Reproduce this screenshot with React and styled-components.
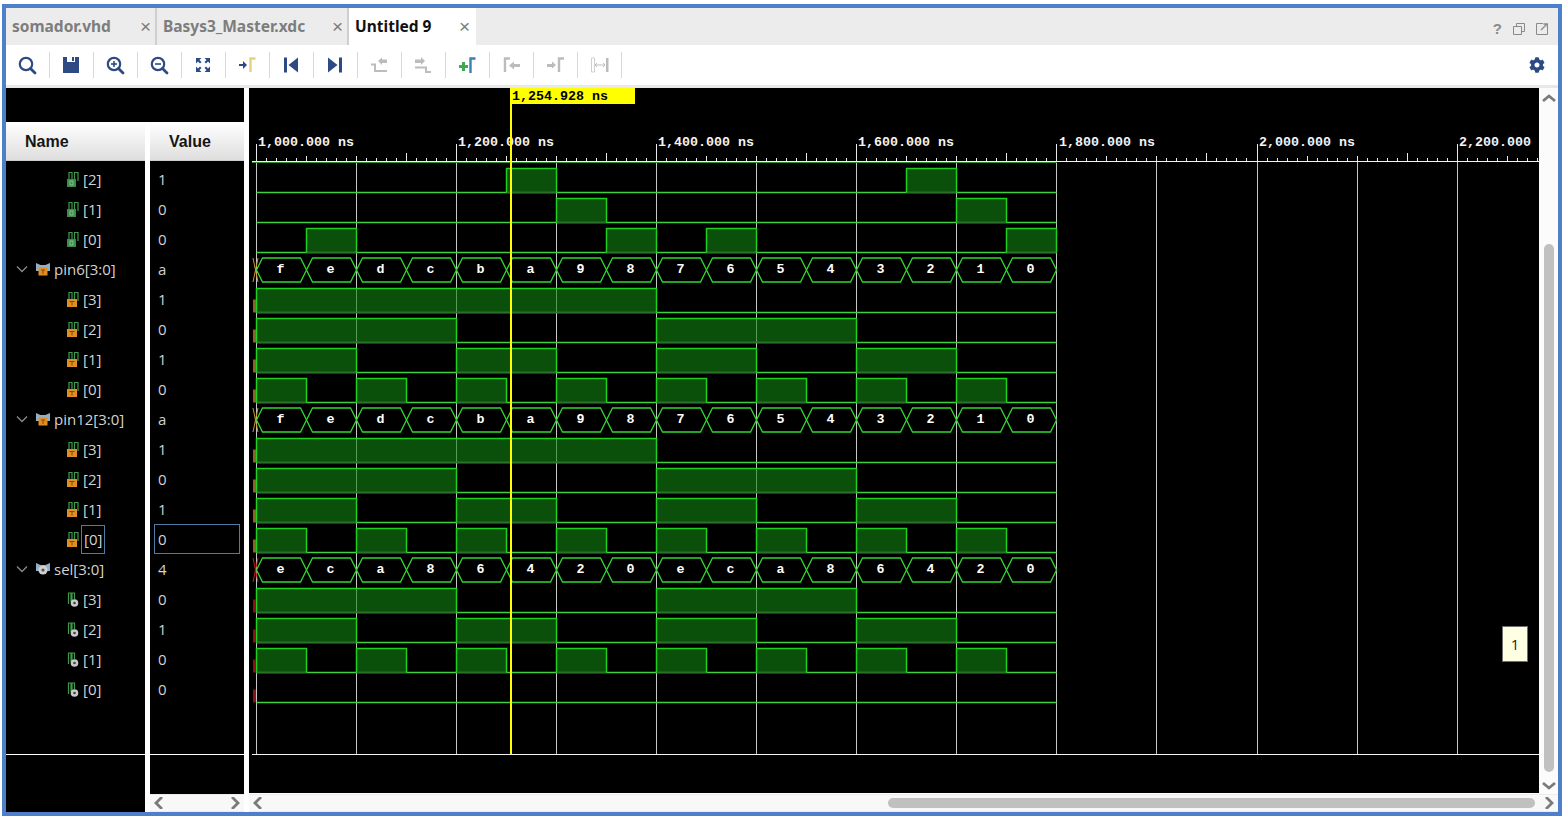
import React from 'react';
import styled, { createGlobalStyle } from 'styled-components';
import { FaCog } from 'react-icons/fa';

const GlobalStyle = createGlobalStyle`
  html, body {
    margin: 0;
    background: #ffffff;
    overflow: hidden;
  }
`;

const Window = styled.div`
  box-sizing: border-box;
  width: 1560px;
  height: 812px;
  margin: 4px 0 0 2px;
  border: 4px solid #4d7fcb;
  display: flex;
  flex-direction: column;
  font-family: 'Open Sans', 'Liberation Sans', sans-serif;
`;

const TabBar = styled.div`
  height: 37px;
  flex: none;
  background: #ececec;
  display: flex;
  align-items: stretch;
`;

const Tab = styled.div`
  box-sizing: border-box;
  width: ${(p) => p.$width}px;
  margin-right: ${(p) => (p.$active ? 0 : 2)}px;
  padding: 0 ${(p) => (p.$active ? 6 : 4)}px 2px 6px;
  display: flex;
  align-items: center;
  justify-content: space-between;
  background: ${(p) => (p.$active ? '#ffffff' : '#ececec')};
  box-shadow: ${(p) => (p.$active ? 'none' : '2px 0 0 #cfcfcf')};
  color: ${(p) => (p.$active ? '#111111' : '#7d7d7d')};
  font-family: 'Noto Sans', sans-serif;
  font-size: 15.5px;
  font-weight: 700;
`;

const TabClose = styled.span`
  color: #7c7c7c;
  font-family: 'Liberation Sans', sans-serif;
  font-size: 19px;
  font-weight: 400;
  line-height: 1;
  margin-top: 2px;
`;

const WindowControls = styled.div`
  margin-left: auto;
  display: flex;
  align-items: center;
  gap: 11px;
  padding: 4px 10px 0 0;
  color: #8a8a8a;
  font-family: 'Liberation Sans', sans-serif;
  font-size: 15px;
  font-weight: 700;
`;

const Toolbar = styled.div`
  height: 40px;
  flex: none;
  background: #ffffff;
  border-bottom: 3px solid #e8e8e8;
  display: flex;
  align-items: center;
`;

const ToolButton = styled.div`
  box-sizing: border-box;
  width: 44px;
  height: 26px;
  flex: none;
  padding-right: 2px;
  display: flex;
  align-items: center;
  justify-content: center;
  border-right: 1px solid #d8d8d8;
`;

const GearButton = styled.div`
  margin-left: auto;
  padding: 0 13px 0 0;
  display: flex;
  color: #2e4a85;
`;

const Main = styled.div`
  flex: 1;
  min-height: 0;
  display: grid;
  grid-template-columns: 238px 1309px;
  column-gap: 5px;
  background: #ffffff;
`;

const LeftBlock = styled.div`
  display: flex;
  flex-direction: column;
  min-height: 0;
`;

const TopStrip = styled.div`
  height: 34px;
  flex: none;
  background: #000000;
`;

const Columns = styled.div`
  flex: 1;
  min-height: 0;
  display: grid;
  grid-template-columns: 139px 94px;
  column-gap: 5px;
`;

const Pane = styled.div`
  background: #000000;
  display: flex;
  flex-direction: column;
  min-height: 0;
`;

const HeaderCell = styled.div`
  box-sizing: border-box;
  height: 39px;
  flex: none;
  display: flex;
  align-items: center;
  padding: 2px 0 0 ${(p) => p.$pad}px;
  background: linear-gradient(#ffffff, #dedede);
  border-bottom: 1px solid #cccccc;
  color: #151515;
  font-family: 'Liberation Sans', sans-serif;
  font-size: 16px;
  font-weight: 700;
`;

const RowArea = styled.div`
  box-sizing: border-box;
  height: 594px;
  flex: none;
  padding-top: 3px;
  border-bottom: 1px solid #ffffff;
`;

const Row = styled.div`
  box-sizing: border-box;
  height: 30px;
  display: flex;
  align-items: center;
  padding-left: ${(p) => (p.$group ? 10 : 60)}px;
  color: #d2d2d2;
  font-size: 15px;
`;

const Chevron = styled.svg`
  width: 12px;
  height: 8px;
  margin-right: 8px;
  flex: none;
`;

const SignalLabel = styled.span`
  box-sizing: border-box;
  height: 29px;
  display: flex;
  align-items: center;
  margin-left: ${(p) => (p.$group ? 4 : 3)}px;
  ${(p) => p.$selected && 'margin-left: 1px; padding: 0 3px; outline: 1px solid #4f7ba6; outline-offset: -1px;'}
`;

const ValueRow = styled.div`
  box-sizing: border-box;
  height: 30px;
  margin-right: 4px;
  margin-left: ${(p) => (p.$selected ? 4 : 0)}px;
  padding-left: ${(p) => (p.$selected ? 4 : 8)}px;
  display: flex;
  align-items: center;
  color: #d2d2d2;
  font-size: 15px;
  ${(p) => p.$selected && 'outline: 1px solid #4f7ba6; outline-offset: -1px;'}
`;

const HScroll = styled.div`
  box-sizing: border-box;
  height: 18px;
  flex: none;
  display: flex;
  align-items: center;
  justify-content: space-between;
  padding: 0 4px;
  background: #f8f8f8;
  border-top: 1px solid #ececec;
  border-bottom: 1px solid #ececec;
`;

const ValueColumn = styled(Pane)`
  background: #ffffff;
`;

const ValueBody = styled.div`
  flex: 1;
  background: #000000;
  display: flex;
  flex-direction: column;
`;

const ValueRest = styled.div`
  flex: 1;
`;

const WaveColumn = styled.div`
  position: relative;
  display: flex;
  flex-direction: column;
  min-height: 0;
`;

const WaveTop = styled.div`
  height: 706px;
  flex: none;
  display: flex;
`;

const WaveCanvas = styled.svg`
  display: block;
  width: 1290px;
  height: 705px;
  background: #000000;
  flex: none;
`;

const VScroll = styled.div`
  width: 19px;
  flex: none;
  box-sizing: border-box;
  padding-top: 5px;
  background: #fbfbfb;
  display: flex;
  flex-direction: column;
  align-items: center;
`;

const VThumb = styled.div`
  width: 10px;
  height: 528px;
  flex: none;
  margin: 141px 0 9px;
  border-radius: 5px;
  background: #c0c0c0;
`;

const HTrack = styled.div`
  flex: 1;
  height: 10px;
  margin: 0 9px 0 0;
  display: flex;
  justify-content: flex-end;
`;

const HThumb = styled.div`
  width: 647px;
  height: 10px;
  border-radius: 5px;
  background: #c0c0c0;
`;

const Tooltip = styled.div`
  position: absolute;
  left: 1253px;
  top: 538px;
  box-sizing: border-box;
  width: 26px;
  height: 36px;
  display: flex;
  align-items: center;
  justify-content: center;
  background: #ffffe4;
  border: 1px solid #6e6e6e;
  color: #222222;
  font-size: 15px;
`;

const Ruler = styled.text`
  fill: #f4f4f4;
  font-family: 'Liberation Mono', monospace;
  font-size: 13.33px;
  font-weight: 700;
`;

const BusText = styled.text`
  fill: #ffffff;
  font-family: 'Liberation Mono', monospace;
  font-size: 13.33px;
  font-weight: 700;
  text-anchor: middle;
`;

const CursorText = styled.text`
  fill: #000000;
  font-family: 'Liberation Mono', monospace;
  font-size: 13.33px;
  font-weight: 700;
`;

const NAVY = '#2e4a85';
const GREY = '#bcbcbc';

// toolbar drawings, 22x22
const Ico = ({ children }) => (
  <svg width="22" height="22" viewBox="0 0 22 22" fill="none">
    {children}
  </svg>
);

const Lens = ({ mark }) => (
  <>
    <circle cx="10" cy="10" r="6.200" stroke={NAVY} strokeWidth="2.200" />
    <path d="M14.500 14.500l4.500 4.500" stroke={NAVY} strokeWidth="2.800" strokeLinecap="round" />
    {mark && <path d="M7 10h6" stroke={NAVY} strokeWidth="1.600" />}
    {mark === 'plus' && <path d="M10 7v6" stroke={NAVY} strokeWidth="1.600" />}
  </>
);

const toolIcons = [
  <Ico><Lens /></Ico>,
  <Ico>
    <rect x="3" y="3" width="16" height="16" fill={NAVY} />
    <rect x="7" y="3" width="8" height="5" fill="#ffffff" />
    <rect x="12" y="3" width="2" height="4" fill={NAVY} />
  </Ico>,
  <Ico><Lens mark="plus" /></Ico>,
  <Ico><Lens mark="minus" /></Ico>,
  <Ico>
    <path d="M4 4h5.500L7.500 6l2 2L8 9.500l-2-2-2 2zM18 4v5.500l-2-2-2 2L12.500 8l2-2-2-2zM4 18v-5.500l2 2 2-2L9.500 14l-2 2 2 2zM18 18h-5.500l2-2-2-2 1.500-1.500 2 2 2-2z" fill={NAVY} />
  </Ico>,
  <Ico>
    <path d="M3 10h4V7l4 4-4 4v-3H3z" fill={NAVY} />
    <path d="M14.500 18V4.500h5" stroke="#e6d27a" strokeWidth="2.400" />
  </Ico>,
  <Ico>
    <rect x="4" y="3.500" width="3" height="15" fill={NAVY} />
    <path d="M18 3.500v15L8.500 11z" fill={NAVY} />
  </Ico>,
  <Ico>
    <rect x="15" y="3.500" width="3" height="15" fill={NAVY} />
    <path d="M4 3.500v15L13.500 11z" fill={NAVY} />
  </Ico>,
  <Ico>
    <path d="M3 10.500h4V17h12" stroke={GREY} strokeWidth="2" />
    <path d="M10 7l4-3.500v2h5v3.500h-5v2z" fill={GREY} />
  </Ico>,
  <Ico>
    <path d="M3 13.500h11v4.500h5" stroke={GREY} strokeWidth="2" />
    <path d="M3 5.500h6V3l4 4-4 4V9H3z" fill={GREY} />
  </Ico>,
  <Ico>
    <path d="M3 11h3V8h3v3h3v3H9v3H6v-3H3z" fill="#3eaa4f" />
    <path d="M14.500 19V4.500h5" stroke="#3d7fb0" strokeWidth="2.400" />
  </Ico>,
  <Ico>
    <path d="M5 18V4.500h5" stroke={GREY} strokeWidth="2.400" />
    <path d="M20 10h-6V7.500L9 11.500l5 4V13h6z" fill={GREY} />
  </Ico>,
  <Ico>
    <path d="M3 10h5V7.500l4 3.500-4 3.500V13H3z" fill={GREY} />
    <path d="M15 18V4.500h5" stroke={GREY} strokeWidth="2.400" />
  </Ico>,
  <Ico>
    <path d="M3.500 4h3v14h-3z" stroke="#cfcfcf" strokeWidth="1" />
    <path d="M18 4h2.500v14H18z" fill={GREY} />
    <path d="M7 11h10M9 9l-2 2 2 2M15 9l2 2-2 2" stroke={GREY} strokeWidth="1" />
  </Ico>,
];

// little signal icons in the name column
const SignalIcon = ({ kind }) => (
  <svg width="14" height="17" viewBox="0 0 14 17" fill="none">
    {kind === 'sel' ? (
      <path d="M2.500 13V2h2.500v9M6 10V2h2.500v6" stroke="#3f9a4d" strokeWidth="1.200" />
    ) : (
      <path d="M3 9V1.500h3V9M8.500 12V1.500H12V10" stroke="#3f9a4d" strokeWidth="1.200" />
    )}
    {kind === 'out' && (
      <>
        <rect x="1" y="8" width="9" height="8" fill="#3f8a4c" />
        <rect x="4" y="10" width="3" height="4" stroke="#8fd09a" strokeWidth="0.800" />
      </>
    )}
    {kind === 'pin' && (
      <>
        <rect x="1" y="8" width="10" height="8" fill="#e08e24" />
        <path d="M3.500 10.500h5M6 10.500v4" stroke="#7a4a10" strokeWidth="1" />
      </>
    )}
    {kind === 'sel' && (
      <>
        <circle cx="8.500" cy="12" r="3.800" fill="#c9c9c9" />
        <circle cx="8.500" cy="12" r="1.300" fill="#444444" />
      </>
    )}
  </svg>
);

const GroupIcon = ({ kind }) => (
  <svg width="14" height="13" viewBox="0 0 14 13" fill="none">
    <path d="M0 0l4.500 2h5L14 0v8H0z" fill="#8fb0c8" />
    {kind === 'pin' ? (
      <>
        <rect x="2.500" y="4.500" width="9" height="8" fill="#e08e24" />
        <path d="M5 7h4M7 7v4" stroke="#7a4a10" strokeWidth="1" />
      </>
    ) : (
      <>
        <circle cx="7" cy="7" r="4.600" fill="#d0d0d0" />
        <circle cx="7" cy="7" r="1.600" fill="#555555" />
      </>
    )}
  </svg>
);

const Caret = ({ dir }) => {
  const paths = {
    up: 'M1 8l6-5 6 5',
    down: 'M1 2l6 5 6-5',
    left: 'M8 0L2 6l6 6',
    right: 'M2 0l6 6-6 6',
  };
  const upright = dir === 'up' || dir === 'down';
  return (
    <svg width={upright ? 14 : 10} height={upright ? 10 : 12} viewBox={upright ? '0 0 14 10' : '0 0 10 12'} fill="none">
      <path d={paths[dir]} stroke="#7a7a7a" strokeWidth="2.800" />
    </svg>
  );
};

const evens = [0, 2, 4, 6, 8, 10, 12, 14];
const bit3 = [0, 1, 2, 3, 4, 5, 6, 7];
const bit2 = [0, 1, 2, 3, 8, 9, 10, 11];
const bit1 = [0, 1, 4, 5, 8, 9, 12, 13];
const hexDown = 'fedcba9876543210'.split('');
const selBus = 'eca86420eca86420'.split('');

const rows = [
  { name: '[2]', value: '1', kind: 'out', high: [5, 13] },
  { name: '[1]', value: '0', kind: 'out', high: [6, 14] },
  { name: '[0]', value: '0', kind: 'out', high: [1, 7, 9, 15] },
  { name: 'pin6[3:0]', value: 'a', kind: 'pin', group: true, bus: hexDown },
  { name: '[3]', value: '1', kind: 'pin', high: bit3 },
  { name: '[2]', value: '0', kind: 'pin', high: bit2 },
  { name: '[1]', value: '1', kind: 'pin', high: bit1 },
  { name: '[0]', value: '0', kind: 'pin', high: evens },
  { name: 'pin12[3:0]', value: 'a', kind: 'pin', group: true, bus: hexDown },
  { name: '[3]', value: '1', kind: 'pin', high: bit3 },
  { name: '[2]', value: '0', kind: 'pin', high: bit2 },
  { name: '[1]', value: '1', kind: 'pin', high: bit1 },
  { name: '[0]', value: '0', kind: 'pin', high: evens, selected: true },
  { name: 'sel[3:0]', value: '4', kind: 'sel', group: true, bus: selBus },
  { name: '[3]', value: '0', kind: 'sel', high: bit2 },
  { name: '[2]', value: '1', kind: 'sel', high: bit1 },
  { name: '[1]', value: '0', kind: 'sel', high: evens },
  { name: '[0]', value: '0', kind: 'sel', high: [] },
];

// svg origin sits at page (249, 88)
const OX = 249;
const OY = 88;
const px = (x) => Math.floor(x - OX) + 0.5;
const py = (y) => y - OY + 0.5;
const segX = (i) => 256.1 + 50.03 * i;

const stubColor = { pin: '#8a6420', sel: '#8c1212' };
const busStub = { pin: '#d0982c', sel: '#c42020' };

// joins neighbouring high slots into [start, end] runs
const toRuns = (high) => {
  const runs = [];
  high.forEach((i) => {
    const last = runs[runs.length - 1];
    if (last && last[1] === i) last[1] = i + 1;
    else runs.push([i, i + 1]);
  });
  return runs;
};

const BitWave = ({ row, index }) => {
  const base = 192 + 30 * index;
  const top = base - 24;
  return (
    <g>
      <path d={`M${px(segX(0))} ${py(base)}H${px(segX(16))}`} stroke="#3fd03f" strokeWidth="1.300" />
      {toRuns(row.high).map(([a, b]) => {
        const x0 = px(segX(a));
        const x1 = px(segX(b));
        return (
          <g key={a}>
            <rect x={x0} y={py(top)} width={x1 - x0} height={24} fill="rgba(16,128,16,0.62)" />
            <path d={`M${x0} ${py(base)}H${x1}`} stroke="#2a6f2a" strokeWidth="1.300" />
            <path d={`M${x0} ${py(base)}V${py(top)}H${x1}V${py(base)}`} stroke="#1fd01f" strokeWidth="1.500" fill="none" />
          </g>
        );
      })}
      {row.kind !== 'out' && (
        <rect x={253 - OX} y={py(base - 13)} width="3" height="13" fill={stubColor[row.kind]} />
      )}
    </g>
  );
};

const BusWave = ({ row, index }) => {
  const mid = 180 + 30 * index - 1;
  const top = mid - 11.5;
  const bot = mid + 12.5;
  return (
    <g>
      <path
        d={`M${253 - OX} ${py(top)}L${258 - OX} ${py(bot)}M${258 - OX} ${py(top)}L${253 - OX} ${py(bot)}`}
        stroke={busStub[row.kind]}
      />
      {row.bus.map((label, i) => {
        const x0 = px(segX(i));
        const x1 = px(segX(i + 1));
        const y0 = py(top);
        const y1 = py(bot);
        const ym = py(mid + 0.5);
        return (
          <g key={i}>
            <path
              d={`M${x0} ${ym}L${x0 + 6} ${y0}H${x1 - 6}L${x1} ${ym}L${x1 - 6} ${y1}H${x0 + 6}Z`}
              stroke="#2fd82f"
              strokeWidth="1.300"
              fill="none"
            />
            <BusText x={(x0 + x1) / 2 - 1} y={py(mid + 3)}>{label}</BusText>
          </g>
        );
      })}
    </g>
  );
};

const gridXs = [256, 356, 456, 556, 656, 756, 856, 956, 1056, 1156, 1257, 1357, 1457];
const majors = [
  [256, '1,000.000 ns'],
  [456, '1,200.000 ns'],
  [656, '1,400.000 ns'],
  [856, '1,600.000 ns'],
  [1057, '1,800.000 ns'],
  [1257, '2,000.000 ns'],
  [1457, '2,200.000'],
];

const tickHeight = (k) => {
  if (k % 20 === 0) return 18;
  if (k % 20 === 15) return 9;
  if (k % 5 === 0) return 6;
  return 4;
};

const Waves = () => {
  const ticks = [];
  for (let k = 0; k * 10.01 + 256 < 1539; k++) ticks.push(k);
  return (
    <WaveCanvas viewBox="0 0 1290 705">
      <g shapeRendering="crispEdges">
        {gridXs.map((x) => (
          <path key={x} d={`M${px(x)} ${py(161)}V${py(754)}`} stroke="#c6c6c6" />
        ))}
        {ticks.map((k) => {
          const x = px(256 + k * 10.01);
          return <path key={k} d={`M${x} ${py(161)}v${-tickHeight(k)}`} stroke="#e8e8e8" />;
        })}
        <path d={`M${252 - OX} ${py(161)}H1290`} stroke="#f2f2f2" />
        <path d={`M${252 - OX} ${py(162)}H${px(1056)}`} stroke="#2f8f2f" />
        <path d={`M${252 - OX} ${py(754)}H1290`} stroke="#f2f2f2" />
      </g>
      {majors.map(([x, label]) => (
        <Ruler key={x} x={x - OX + 2} y={146 - OY}>{label}</Ruler>
      ))}
      {rows.map((row, i) =>
        row.bus ? <BusWave key={i} row={row} index={i} /> : <BitWave key={i} row={row} index={i} />
      )}
      <rect x={510 - OX} y="0" width="2" height={754 - OY} fill="#ffff00" />
      <rect x={511 - OX} y="0" width="124" height="16" fill="#ffff00" />
      <CursorText x={512 - OX} y="12">1,254.928 ns</CursorText>
    </WaveCanvas>
  );
};

export default function App() {
  return (
    <>
      <GlobalStyle />
      <Window>
        <TabBar>
          <Tab $width={149}>somador.vhd<TabClose>×</TabClose></Tab>
          <Tab $width={190}>Basys3_Master.xdc<TabClose>×</TabClose></Tab>
          <Tab $width={127} $active>Untitled 9<TabClose>×</TabClose></Tab>
          <WindowControls>
            <span>?</span>
            <svg width="12" height="12" viewBox="0 0 12 12" fill="none">
              <path d="M3.500 3.500V.5h8v8h-3M.5 3.500h8v8h-8z" stroke="#8a8a8a" />
            </svg>
            <svg width="12" height="12" viewBox="0 0 12 12" fill="none">
              <path d="M7 .5H.5v11h11V5" stroke="#8a8a8a" />
              <path d="M5 7l6-6M7.500 1H11.500V5" stroke="#8a8a8a" strokeWidth="1.300" />
            </svg>
          </WindowControls>
        </TabBar>
        <Toolbar>
          {toolIcons.map((icon, i) => (
            <ToolButton key={i}>{icon}</ToolButton>
          ))}
          <GearButton><FaCog size={16} /></GearButton>
        </Toolbar>
        <Main>
          <LeftBlock>
            <TopStrip />
            <Columns>
              <Pane>
                <HeaderCell $pad={19}>Name</HeaderCell>
                <RowArea>
                  {rows.map((row, i) => (
                    <Row key={i} $group={row.group}>
                      {row.group && (
                        <Chevron viewBox="0 0 12 8" fill="none">
                          <path d="M1 1.500l5 5 5-5" stroke="#8a8a8a" strokeWidth="1.300" />
                        </Chevron>
                      )}
                      {row.group ? <GroupIcon kind={row.kind} /> : <SignalIcon kind={row.kind} />}
                      <SignalLabel $group={row.group} $selected={row.selected}>{row.name}</SignalLabel>
                    </Row>
                  ))}
                </RowArea>
              </Pane>
              <ValueColumn>
                <ValueBody>
                  <HeaderCell $pad={19}>Value</HeaderCell>
                  <RowArea>
                    {rows.map((row, i) => (
                      <ValueRow key={i} $selected={row.selected}>{row.value}</ValueRow>
                    ))}
                  </RowArea>
                  <ValueRest />
                </ValueBody>
                <HScroll>
                  <Caret dir="left" />
                  <Caret dir="right" />
                </HScroll>
              </ValueColumn>
            </Columns>
          </LeftBlock>
          <WaveColumn>
            <WaveTop>
              <Waves />
              <VScroll>
                <Caret dir="up" />
                <VThumb />
                <Caret dir="down" />
              </VScroll>
            </WaveTop>
            <HScroll>
              <Caret dir="left" />
              <HTrack><HThumb /></HTrack>
              <Caret dir="right" />
            </HScroll>
            <Tooltip>1</Tooltip>
          </WaveColumn>
        </Main>
      </Window>
    </>
  );
}
